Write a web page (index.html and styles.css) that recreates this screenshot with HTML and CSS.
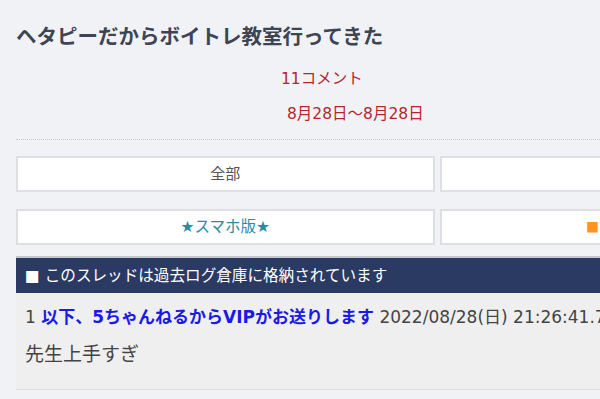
FILE: index.html
```html
<!DOCTYPE html>
<html lang="ja">
<head>
    <meta charset="UTF-8">
    <meta name="viewport" content="width=device-width, initial-scale=1.0">
    <title>ヘタピーだからボイトレ教室行ってきた</title>
    <link rel="stylesheet" href="styles.css">
</head>
<body>

    <!-- Thread page -->
    <div class="page">
        <h1 class="thread-title">ヘタピーだからボイトレ教室行ってきた</h1>

        <div class="thread-meta">
            <p class="count">11コメント</p>
            <p class="period">8月28日～8月28日</p>
        </div>

        <!-- Navigation buttons -->
        <div class="nav-grid">
            <a href="#" class="nav-btn">全部</a>
            <a href="#" class="nav-btn">最新50</a>
            <a href="#" class="nav-btn nav-sp">★スマホ版★</a>
            <a href="#" class="nav-btn"><span class="mark">■</span> 掲示板に戻る <span class="mark">■</span></a>
        </div>

        <!-- Thread body -->
        <div class="thread">
            <div class="thread-head">■ このスレッドは過去ログ倉庫に格納されています</div>
            <div class="post">
                <div class="post-info">
                    <span class="num">1</span>
                    <span class="name">以下、5ちゃんねるからVIPがお送りします</span>
                    <span class="date">2022/08/28(日) 21:26:41.76 ID:vQ2kWd3A0</span>
                </div>
                <div class="post-body">先生上手すぎ</div>
            </div>
        </div>
    </div>

</body>
</html>
```

FILE: styles.css
```css
/* General Styles */
html {
    overflow: hidden;
}

body {
    margin: 0;
    padding: 0;
    background: #f1f2f6;
    font-family: "DejaVu Sans", "Noto Sans CJK JP", sans-serif;
    color: #444;
}

.page {
    width: 842px;
    padding: 22px 0 0 16px;
}

.thread-title {
    margin: 0;
    font-size: 20.5px;
    line-height: 30px;
    font-weight: bold;
    color: #3d4452;
}

/* Count and period */
.thread-meta {
    margin-top: 10px;
    padding-bottom: 7px;
    border-bottom: 1px dotted #c8c9ce;
    width: 600px;
}

.thread-meta p {
    margin: 0;
    line-height: 35px;
    font-size: 15.5px;
    color: #b3262c;
}

.count {
    padding-left: 265px;
}

.period {
    padding-left: 271px;
}

/* Buttons */
.nav-grid {
    display: grid;
    grid-template-columns: 1fr 1fr;
    column-gap: 5px;
    row-gap: 17px;
    margin-top: 16px;
}

.nav-btn {
    display: block;
    height: 32px;
    line-height: 32px;
    background: #fff;
    border: 2px solid #dedfe2;
    text-align: center;
    font-size: 15px;
    color: #555;
    text-decoration: none;
}

.nav-sp {
    color: #2a8ba3;
    font-size: 15.5px;
}

.mark {
    color: #ff9326;
    font-family: "Noto Sans CJK JP", sans-serif;
    font-size: 13px;
}

/* Thread box */
.thread {
    margin-top: 11px;
    border-top: 2px solid #c5c7cf;
}

.thread-head {
    height: 35px;
    line-height: 36px;
    padding-left: 9px;
    background: #2b3a63;
    color: #fff;
    font-size: 15.6px;
}

.post {
    background: #efefef;
    padding: 12px 9px 23px;
    border-bottom: 1px solid #dcdcdc;
}

.post-info {
    line-height: 24px;
    font-size: 17px;
    white-space: nowrap;
}

.num {
    color: #444;
}

.name {
    color: #1a1ae6;
    font-weight: bold;
}

.date {
    color: #444;
}

.post-body {
    margin-top: 13px;
    line-height: 24px;
    font-size: 19px;
    color: #444;
}
```
